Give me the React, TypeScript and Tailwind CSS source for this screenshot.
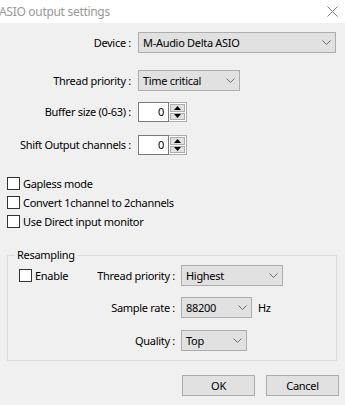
import React, { FC, ReactNode } from "react";

const Chevron: FC = () => (
  <svg width="9" height="5" viewBox="0 0 9 5" className="shrink-0">
    <path d="M0.5 0.5 L4.5 4.5 L8.5 0.5" fill="none" stroke="#6b6b6b" strokeWidth="1" />
  </svg>
);

const Select: FC<{ value: string; width: string }> = ({ value, width }) => (
  <div
    className={`${width} h-[21px] flex items-center justify-between pl-[4px] pr-[4px] bg-[#e1e1e1] border border-[#adadad] text-black`}
  >
    <span>{value}</span>
    <Chevron />
  </div>
);

const Spin: FC<{ value: string }> = ({ value }) => (
  <div className="flex h-[20px]">
    <div className="w-[31px] h-full bg-white border border-[#7a7a7a] flex items-center justify-end pr-[4px]">
      {value}
    </div>
    <div className="w-[18px] h-full border border-l-0 border-[#adadad] bg-white p-[1px] flex flex-col gap-[1px]">
      <div className="flex-1 bg-[#e1e1e1] border border-[#adadad] flex items-center justify-center">
        <svg width="7" height="4" viewBox="0 0 7 4">
          <path d="M3.5 0 L7 4 L0 4 Z" fill="#000" />
        </svg>
      </div>
      <div className="flex-1 bg-[#e1e1e1] border border-[#adadad] flex items-center justify-center">
        <svg width="7" height="4" viewBox="0 0 7 4">
          <path d="M0 0 L7 0 L3.5 4 Z" fill="#000" />
        </svg>
      </div>
    </div>
  </div>
);

const Checkbox: FC<{ label: string }> = ({ label }) => (
  <div className="flex items-center h-[19px]">
    <div className="w-[13px] h-[13px] bg-white border border-[#333333] shrink-0" />
    <span className="ml-[3px]">{label}</span>
  </div>
);

const Row: FC<{ label: string; children: ReactNode; className?: string }> = ({
  label,
  children,
  className = "",
}) => (
  <div className={`flex items-center ${className}`}>
    <div className="w-[124px] text-right whitespace-nowrap">{label}</div>
    <div className="ml-[7px]">{children}</div>
  </div>
);

const App: FC = () => {
  return (
    <div
      className="w-[345px] h-[405px] bg-[#f0f0f0] text-[11px] leading-[16px] tracking-[-0.3px] text-black flex flex-col overflow-hidden"
      style={{ fontFamily: '"Noto Sans", "Liberation Sans", sans-serif' }}
    >
      <div className="h-[23px] bg-white flex items-center justify-between shrink-0">
        <span className="text-[12px] text-[#999999] -ml-[1px]">ASIO output settings</span>
        <svg width="11" height="11" viewBox="0 0 11 11" className="mr-[7px]">
          <path d="M0.5 0.5 L10.5 10.5 M10.5 0.5 L0.5 10.5" stroke="#808080" strokeWidth="1" />
        </svg>
      </div>

      <div className="flex flex-col pl-[7px] pr-[8px]">
        <Row label="Device :" className="mt-[9px]">
          <Select value="M-Audio Delta ASIO" width="w-[198px]" />
        </Row>
        <Row label="Thread priority :" className="mt-[17px]">
          <Select value="Time critical" width="w-[102px]" />
        </Row>
        <Row label="Buffer size (0-63) :" className="mt-[11px]">
          <Spin value="0" />
        </Row>
        <Row label="Shift Output channels :" className="mt-[13px]">
          <Spin value="0" />
        </Row>

        <div className="flex flex-col mt-[19px]">
          <Checkbox label="Gapless mode" />
          <Checkbox label="Convert 1channel to 2channels" />
          <Checkbox label="Use Direct input monitor" />
        </div>

        <div className="relative mt-[24px] border border-[#dcdcdc] flex flex-col pt-[9px] pb-[9px]">
          <span className="absolute -top-[9px] left-[7px] px-[2px] bg-[#f0f0f0]">Resampling</span>
          <div className="flex items-center">
            <div className="w-[167px] flex items-center justify-between">
              <div className="pl-[11px]">
                <Checkbox label="Enable" />
              </div>
              <span>Thread priority :</span>
            </div>
            <div className="ml-[6px]">
              <Select value="Highest" width="w-[102px]" />
            </div>
          </div>
          <div className="flex items-center mt-[11px]">
            <div className="w-[167px] text-right">Sample rate :</div>
            <div className="ml-[6px]">
              <Select value="88200" width="w-[71px]" />
            </div>
            <span className="ml-[6px]">Hz</span>
          </div>
          <div className="flex items-center mt-[12px]">
            <div className="w-[167px] text-right">Quality :</div>
            <div className="ml-[6px]">
              <Select value="Top" width="w-[66px]" />
            </div>
          </div>
        </div>

        <div className="flex justify-end gap-[11px] mt-[14px] -mr-[2px]">
          <button className="w-[73px] h-[21px] bg-[#e1e1e1] border border-[#adadad]">OK</button>
          <button className="w-[73px] h-[21px] bg-[#e1e1e1] border border-[#adadad]">Cancel</button>
        </div>
      </div>
    </div>
  );
};

export default App;
